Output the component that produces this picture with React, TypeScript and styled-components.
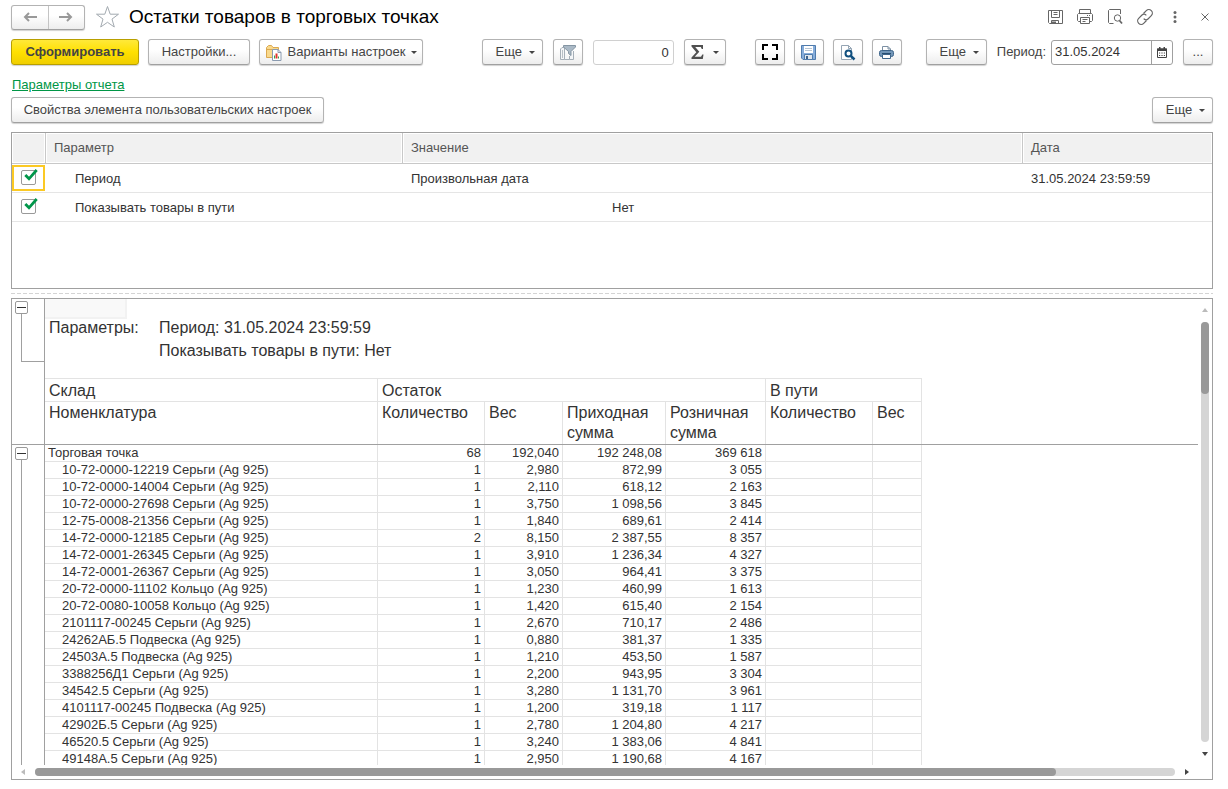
import React from "react";
import styled, { createGlobalStyle, css } from "styled-components";

const GlobalStyle = createGlobalStyle`
  * { box-sizing: border-box; }
  html, body, #root { height: 100%; }
  body {
    margin: 0;
    background: #fff;
    color: #333;
    font-family: "Liberation Sans", Arial, sans-serif;
    font-size: 13px;
    line-height: 16px;
  }
  button, input { font: inherit; color: inherit; }
`;

const Page = styled.div`
  display: flex;
  flex-direction: column;
  min-width: 1200px;
  height: 100vh;
  min-height: 500px;
  padding: 3px 15px 9px 11px;
  overflow: hidden;
`;

/* ---------- Title bar ---------- */

const TitleBar = styled.header`
  display: flex;
  align-items: center;
  height: 28px;
`;

const raised = css`
  border: 1px solid #b3b3b3;
  border-bottom-color: #a0a0a0;
  border-radius: 3px;
  background: linear-gradient(#fff 40%, #ededed);
  box-shadow: 0 1px 1px rgba(0, 0, 0, 0.18);
`;

const HistoryNav = styled.nav`
  ${raised}
  display: flex;
  width: 74px;
  height: 25px;
`;

const HistoryButton = styled.button`
  display: flex;
  flex: 1;
  align-items: center;
  justify-content: center;
  padding: 0;
  border: 0;
  background: none;
  & + & { border-left: 1px solid #c4c4c4; }
`;

const StarButton = styled.button`
  display: flex;
  margin: 0 9px 0 10px;
  padding: 0;
  border: 0;
  background: none;
`;

const Title = styled.h1`
  margin: 0;
  color: #000;
  font-size: 19px;
  font-weight: 400;
  line-height: 24px;
`;

const WindowActions = styled.div`
  display: flex;
  gap: 14px;
  margin-left: auto;
`;

const GhostButton = styled.button`
  display: flex;
  align-items: center;
  justify-content: center;
  width: 16px;
  height: 16px;
  padding: 0;
  border: 0;
  background: none;
`;

/* ---------- Toolbars ---------- */

const Toolbar = styled.div`
  display: flex;
  align-items: center;
  height: 26px;
  margin-top: 8px;
`;

const ToolGroup = styled.div<{ $gap: number; $before?: number }>`
  display: flex;
  align-items: center;
  gap: ${(p) => p.$gap}px;
  margin-left: ${(p) => (p.$before ? `${p.$before}px` : "0")};
`;

const Push = styled.div`
  flex: 1;
`;

const Button = styled.button<{ $primary?: boolean; $width?: number; $gap?: number }>`
  ${raised}
  display: flex;
  align-items: center;
  justify-content: center;
  gap: ${(p) => p.$gap ?? 6}px;
  height: 26px;
  width: ${(p) => (p.$width ? `${p.$width}px` : "auto")};
  padding: 0 ${(p) => (p.$width ? 0 : 12)}px;
  color: #444;
  white-space: nowrap;
  ${(p) =>
    p.$primary &&
    css`
      border-color: #b89f00;
      background: linear-gradient(#ffe93a, #ffe000 50%, #f0ce00);
      font-weight: 700;
    `}
`;

const Caret = styled.span`
  border: 3px solid transparent;
  border-top-color: #444;
  border-bottom: 0;
`;

const MoreText = styled.span`
  padding-left: 6px;
`;

const CountInput = styled.input`
  width: 81px;
  height: 25px;
  padding: 0 4px;
  border: 1px solid #d0d0d0;
  border-radius: 3px;
  text-align: right;
`;

const FieldLabel = styled.label`
  color: #444;
  margin-right: -5px;
`;

const DateField = styled.div`
  display: flex;
  width: 122px;
  height: 25px;
  border: 1px solid #a0a0a0;
  border-radius: 3px;
`;

const DateInput = styled.input`
  flex: 1;
  min-width: 0;
  padding: 0 3px;
  border: 0;
  background: none;
`;

const CalendarButton = styled.button`
  display: flex;
  align-items: center;
  justify-content: center;
  width: 21px;
  padding: 0;
  border: 0;
  border-left: 1px solid #a0a0a0;
  background: none;
`;

const SectionLink = styled.a`
  align-self: flex-start;
  margin: 12px 0 4px 1px;
  color: #009646;
`;

const SettingsBar = styled.div`
  display: flex;
  justify-content: space-between;
  height: 27px;
`;

/* ---------- Parameters table ---------- */

const ParamsPanel = styled.section`
  flex: none;
  height: 157px;
  margin-top: 8px;
  border: 1px solid #a0a0a0;
`;

const ParamsTable = styled.table`
  width: 100%;
  border-collapse: separate;
  border-spacing: 0;
  table-layout: fixed;
`;

const ParamHead = styled.th`
  height: 31px;
  padding: 0 8px;
  border-right: 1px solid #c8c8c8;
  border-bottom: 1px solid #c8c8c8;
  background: #f1f1f1;
  box-shadow: inset 0 0 0 1px #fff;
  color: #555;
  font-weight: 400;
  text-align: left;
  &:last-child { border-right: 0; }
`;

const ParamCell = styled.td<{ $indent?: number }>`
  height: 29px;
  padding: 2px 8px 0 ${(p) => p.$indent ?? 8}px;
  border-bottom: 1px solid #e5e5e5;
`;

const CheckCell = styled.td`
  height: 29px;
  padding: 0;
  border-bottom: 1px solid #e5e5e5;
`;

const CheckBox = styled.label<{ $active?: boolean }>`
  position: relative;
  display: block;
  width: 33px;
  height: 26px;
  padding: 3px 0 0 7px;
  border: 2px solid ${(p) => (p.$active ? "#fbc924" : "transparent")};
  input {
    appearance: none;
    display: block;
    width: 15px;
    height: 15px;
    margin: 0;
    border: 1px solid #999;
    border-radius: 2px;
  }
  svg {
    position: absolute;
    top: 2px;
    left: 10px;
    pointer-events: none;
  }
`;

const Splitter = styled.div`
  flex: none;
  height: 1px;
  margin: 4px 0;
  background: repeating-linear-gradient(90deg, #d4d4d4 0 4px, transparent 4px 6px);
`;

/* ---------- Report ---------- */

const ReportPanel = styled.section`
  display: grid;
  flex: 1;
  grid-template: minmax(0, 1fr) 14px / minmax(0, 1fr) 14px;
  min-height: 0;
  border: 1px solid #a0a0a0;
`;

const Sheet = styled.div`
  display: flex;
  flex-direction: column;
  min-height: 0;
  overflow: hidden;
`;

const Pane = styled.div<{ $frozen?: boolean }>`
  display: flex;
  flex: ${(p) => (p.$frozen ? "none" : "1")};
  min-height: 0;
  overflow: hidden;
  border-bottom: ${(p) => (p.$frozen ? "1px solid #a0a0a0" : "0")};
`;

const Gutter = styled.div`
  display: flex;
  flex: none;
  flex-direction: column;
  width: 33px;
  padding: 2px 0 0 3px;
  border-right: 1px solid #a0a0a0;
`;

const CollapseButton = styled.button`
  display: flex;
  flex: none;
  align-items: center;
  justify-content: center;
  width: 13px;
  height: 13px;
  padding: 0;
  border: 1px solid #999;
  border-radius: 2px;
  background: #fff;
  &::before {
    content: "";
    width: 9px;
    height: 1px;
    background: #333;
  }
`;

const GroupLine = styled.div<{ $closed?: boolean }>`
  flex: ${(p) => (p.$closed ? "0 0 48px" : "1")};
  margin-left: 6px;
  border-left: 1px solid #a0a0a0;
  border-bottom: ${(p) => (p.$closed ? "1px solid #a0a0a0" : "0")};
`;

const PaneContent = styled.div`
  flex: 1;
  min-width: 0;
`;

const CurrentCell = styled.div`
  width: 82px;
  height: 20px;
  border: solid #f2f2f2;
  border-width: 0 2px 2px 0;
  background: #f9f9f9;
`;

const ReportParams = styled.dl`
  display: grid;
  grid-template-columns: 110px 1fr;
  align-content: start;
  height: 59px;
  margin: 0;
  padding-left: 4px;
  font-size: 16px;
  line-height: 18px;
  dt, dd { height: 23px; margin: 0; }
  dd { grid-column: 2; }
`;

const ReportTable = styled.table`
  width: 877px;
  border-collapse: separate;
  border-spacing: 0;
  table-layout: fixed;
`;

const HeadCell = styled.th<{ $top?: boolean }>`
  height: ${(p) => (p.$top ? 24 : 42)}px;
  padding: ${(p) => (p.$top ? "2px 4px 0" : "1px 4px 0")};
  border: solid #e3e3e3;
  border-width: ${(p) => (p.$top ? "1px 1px 1px 0" : "0 1px 0 0")};
  font-size: 16px;
  font-weight: 400;
  line-height: 20px;
  text-align: left;
  vertical-align: top;
`;

const BodyCell = styled.td<{ $kind: "group" | "item" | "number" }>`
  height: 17px;
  padding: 0 3px 0 ${(p) => (p.$kind === "item" ? 17 : 3)}px;
  border: solid #e3e3e3;
  border-width: 0 1px 1px 0;
  line-height: 16px;
  text-align: ${(p) => (p.$kind === "number" ? "right" : "left")};
  white-space: nowrap;
`;

const VerticalBar = styled.div`
  display: flex;
  flex-direction: column;
  align-items: center;
  justify-content: space-between;
  padding: 8px 0;
`;

const HorizontalBar = styled.div`
  display: flex;
  align-items: center;
  justify-content: space-between;
  padding: 0 8px;
`;

const Track = styled.div<{ $vertical?: boolean }>`
  flex: 1;
  border-radius: 4px;
  background: #d5d5d5;
  ${(p) => (p.$vertical ? "width: 8px; margin: 9px 0;" : "height: 8px; margin: 0 9px;")}
`;

const Thumb = styled.div<{ $vertical?: boolean }>`
  width: ${(p) => (p.$vertical ? "100%" : "89.6%")};
  height: ${(p) => (p.$vertical ? "17.1%" : "100%")};
  border-radius: 4px;
  background: #999;
`;

const ScrollButton = styled.button`
  display: flex;
  padding: 0;
  border: 0;
  background: none;
`;

/* ---------- Icons ---------- */

const Arrow = ({ back }: { back?: boolean }) => (
  <svg width="14" height="12" viewBox="0 0 14 12" fill="none" stroke="#999" strokeWidth="2">
    <path d={back ? "M14 6H2.500M6 2L2 6l4 4" : "M0 6H11.500M8 2l4 4-4 4"} />
  </svg>
);

const Star = () => (
  <svg width="25" height="24" viewBox="0 0 25 24" fill="#fff" stroke="#a3aab0" strokeWidth="1">
    <path d="M12.500 1.500L15.200 9.200H23.500L17 14.100L19.300 22L12.500 17.300L5.700 22L8 14.100L1.500 9.200H9.800Z" />
  </svg>
);

const VariantsIcon = () => (
  <svg width="17" height="17" viewBox="0 0 17 17">
    <path d="M1.500 13.500V3.500L3.500 1.500H6.500L8 3.500H13.500V13.500Z" fill="#f9d98c" stroke="#dba850" />
    <path d="M1.500 5.500H13.500" stroke="#dba850" />
    <path d="M7.500 5.500H13L16 8.500V16.500H7.500Z" fill="#fff" stroke="#8b9bb0" />
    <path d="M13 5.500V8.500H16" fill="none" stroke="#8b9bb0" />
    <path d="M9.500 14.500v-3" stroke="#2fa84f" strokeWidth="1" />
    <path d="M11.500 14.500v-5" stroke="#e0352b" strokeWidth="2" />
    <path d="M13.500 14.500v-2" stroke="#2fa84f" strokeWidth="1" />
  </svg>
);

const FilterIcon = () => (
  <svg width="17" height="17" viewBox="0 0 17 17">
    <path d="M1.500 5L3 3.500H5.500V15.500H1.500Z" fill="#f4f6f8" stroke="#a5afb8" />
    <path d="M5.500 6V15.500H10.500M14.500 7V15.500H10.500V12" fill="#f4f6f8" stroke="#a5afb8" />
    <path d="M3.500 6v8" stroke="#b8c0c7" />
    <path d="M4.500 1.500H16.500V3L12 7.500V11.500L9.500 9.500V7.500L4.500 3Z" fill="#aab9c6" stroke="#8495a3" />
  </svg>
);

const SigmaIcon = () => (
  <svg width="13" height="14" viewBox="0 0 13 14" fill="#505050">
    <path d="M.5 0H12V4H10.800L9.800 2H4.200L8.300 6.700L3.700 11.800H10L11.300 9.500H12.500L11.800 14H.5V12.500L5.300 7.200L.5 1.500Z" />
  </svg>
);

const ExpandIcon = () => (
  <svg width="16" height="16" viewBox="0 0 16 16" fill="none" stroke="#000" strokeWidth="2">
    <path d="M1 6V1H6M10 1H15V6M15 10V15H10M6 15H1V10" />
  </svg>
);

const DiskIcon = () => (
  <svg width="15" height="15" viewBox="0 0 15 15">
    <path d="M.5 .5H14.500V14.500H2L.5 13Z" fill="#86addb" stroke="#4f7bac" />
    <path d="M3 1H12V8H3Z" fill="#fff" />
    <path d="M4 3.500h7M4 5.500h7" stroke="#b5c4d3" />
    <path d="M3.500 9.500H11.500V14.500H3.500Z" fill="#dfe6ed" stroke="#4f7bac" />
    <path d="M5 11H7V14H5Z" fill="#3c628c" />
  </svg>
);

const PreviewIcon = () => (
  <svg width="17" height="17" viewBox="0 0 17 17" fill="none">
    <path d="M2.500 1.500H9.500L12.500 4.500V15.500H2.500Z" fill="#fff" stroke="#95a5b4" />
    <path d="M9.500 1.500V4.500H12.500" stroke="#95a5b4" />
    <circle cx="9.500" cy="9.500" r="3" fill="#fff" stroke="#11507f" strokeWidth="2" />
    <path d="M11.800 11.800l3.700 3.700" stroke="#11507f" strokeWidth="2.500" />
  </svg>
);

const PrinterIcon = () => (
  <svg width="15" height="15" viewBox="0 0 15 15">
    <path d="M3.500 6V1.500H9L11.500 4V6" fill="#fff" stroke="#7c90a3" />
    <path d="M9 1.500V4H11.500" fill="none" stroke="#7c90a3" />
    <rect x=".5" y="5.500" width="14" height="6" rx="2" fill="#7296b8" stroke="#3e658a" />
    <path d="M3 8.500h9" stroke="#284d70" />
    <path d="M3.500 9.500H11.500V13.500H3.500Z" fill="#fff" stroke="#3e658a" />
  </svg>
);

const CalendarIcon = () => (
  <svg width="10" height="11" viewBox="0 0 10 11">
    <path d="M.5 2V10.500H9.500V2Z" fill="none" stroke="#444" />
    <path d="M0 1.500H10V4H0ZM2 0H3.500V2H2ZM6.500 0H8V2H6.500Z" fill="#444" />
    <path d="M2 6h6M2 8.500h6" stroke="#444" strokeDasharray="1.200 1.200" />
  </svg>
);

const line = { fill: "none", stroke: "#666", strokeWidth: 1 } as const;

const SaveOutline = () => (
  <svg width="16" height="16" viewBox="0 0 16 16" {...line}>
    <path d="M1.500 1.500H15.500V14.500H2.500L1.500 13.500Z" />
    <path d="M4.500 1.500V8.500H12.500V1.500M6.500 3.500h4M6.500 5.500h4" />
    <path d="M4.500 14.500V11.500H11.500V14.500" />
    <path d="M5 13.500h4" strokeWidth="2" />
  </svg>
);

const PrintOutline = () => (
  <svg width="16" height="16" viewBox="0 0 16 16" {...line}>
    <path d="M2.500 4.500V.5H13.500V4.500M3.500 12.500H1.500L.5 11.500V5.500L1.500 4.500H14.500L15.500 5.500V11.500L14.500 12.500H12.500" />
    <path d="M3.500 8.500H12.500V14.500H3.500ZM5.500 10.500h5M5.500 12.500h3M10 6.500h1M12 6.500h1" />
  </svg>
);

const SearchOutline = () => (
  <svg width="16" height="16" viewBox="0 0 16 16" {...line}>
    <path d="M6.500 14.500H2.500L1.500 13.500V1.500L2.500 .5H13.500V5" />
    <circle cx="10.500" cy="9" r="3.200" />
    <path d="M12.500 11.500L15 14.500" strokeWidth="1.800" />
  </svg>
);

const LinkOutline = () => (
  <svg width="16" height="16" viewBox="0 0 16 16" {...line} strokeWidth="1.200">
    <path d="M6.500 4.500L9.300 1.700A2.900 2.900 0 0 1 14.300 6.700L11 10A2.900 2.900 0 0 1 6.700 9.700" />
    <path d="M9.500 11.500L6.700 14.300A2.900 2.900 0 0 1 1.700 9.300L5 6A2.900 2.900 0 0 1 9.300 6.300" />
  </svg>
);

const Dots = () => (
  <svg width="4" height="14" viewBox="0 0 4 14" fill="#666">
    <circle cx="2" cy="2.500" r="1.500" />
    <circle cx="2" cy="7" r="1.500" />
    <circle cx="2" cy="11.500" r="1.500" />
  </svg>
);

const Cross = () => (
  <svg width="8" height="8" viewBox="0 0 8 8" stroke="#666">
    <path d="M.5 .5l7 7M7.500 .5L.5 7.500" />
  </svg>
);

const CheckMark = () => (
  <svg width="14" height="13" viewBox="0 0 14 13" fill="none" stroke="#00964a" strokeWidth="2.800">
    <path d="M1.300 6L5 9.800L12.700 1" />
  </svg>
);

const Triangle = ({ points, muted }: { points: string; muted?: boolean }) => (
  <svg width="6" height="6" viewBox="0 0 6 6" fill={muted ? "#bbb" : "#444"}>
    <polygon points={points} />
  </svg>
);

/* ---------- Data ---------- */

const params = [
  { name: "Период", value: "Произвольная дата", date: "31.05.2024 23:59:59", active: true },
  { name: "Показывать товары в пути", value: "Нет", date: "", indent: 209 },
];

const rows: string[][] = [
  ["Торговая точка", "68", "192,040", "192 248,08", "369 618"],
  ["10-72-0000-12219 Серьги (Ag 925)", "1", "2,980", "872,99", "3 055"],
  ["10-72-0000-14004 Серьги (Ag 925)", "1", "2,110", "618,12", "2 163"],
  ["10-72-0000-27698 Серьги (Ag 925)", "1", "3,750", "1 098,56", "3 845"],
  ["12-75-0008-21356 Серьги (Ag 925)", "1", "1,840", "689,61", "2 414"],
  ["14-72-0000-12185 Серьги (Ag 925)", "2", "8,150", "2 387,55", "8 357"],
  ["14-72-0001-26345 Серьги (Ag 925)", "1", "3,910", "1 236,34", "4 327"],
  ["14-72-0001-26367 Серьги (Ag 925)", "1", "3,050", "964,41", "3 375"],
  ["20-72-0000-11102 Кольцо (Ag 925)", "1", "1,230", "460,99", "1 613"],
  ["20-72-0080-10058 Кольцо (Ag 925)", "1", "1,420", "615,40", "2 154"],
  ["2101117-00245 Серьги (Ag 925)", "1", "2,670", "710,17", "2 486"],
  ["24262АБ.5 Подвеска (Ag 925)", "1", "0,880", "381,37", "1 335"],
  ["24503А.5 Подвеска (Ag 925)", "1", "1,210", "453,50", "1 587"],
  ["3388256Д1 Серьги (Ag 925)", "1", "2,200", "943,95", "3 304"],
  ["34542.5 Серьги (Ag 925)", "1", "3,280", "1 131,70", "3 961"],
  ["4101117-00245 Подвеска (Ag 925)", "1", "1,200", "319,18", "1 117"],
  ["42902Б.5 Серьги (Ag 925)", "1", "2,780", "1 204,80", "4 217"],
  ["46520.5 Серьги (Ag 925)", "1", "3,240", "1 383,06", "4 841"],
  ["49148А.5 Серьги (Ag 925)", "1", "2,950", "1 190,68", "4 167"],
];

const columnWidths = [333, 107, 78, 103, 100, 107, 49];

const Columns = () => (
  <colgroup>
    {columnWidths.map((width, i) => (
      <col key={i} width={width} />
    ))}
  </colgroup>
);

const MoreButton = () => (
  <Button $width={61} $gap={7}>
    <MoreText>Еще</MoreText>
    <Caret />
  </Button>
);

export default function App() {
  return (
    <>
      <GlobalStyle />
      <Page>
        <TitleBar>
          <HistoryNav>
            <HistoryButton aria-label="Назад"><Arrow back /></HistoryButton>
            <HistoryButton aria-label="Вперед"><Arrow /></HistoryButton>
          </HistoryNav>
          <StarButton aria-label="Избранное"><Star /></StarButton>
          <Title>Остатки товаров в торговых точках</Title>
          <WindowActions>
            <GhostButton aria-label="Сохранить"><SaveOutline /></GhostButton>
            <GhostButton aria-label="Печать"><PrintOutline /></GhostButton>
            <GhostButton aria-label="Просмотр"><SearchOutline /></GhostButton>
            <GhostButton aria-label="Ссылка"><LinkOutline /></GhostButton>
            <GhostButton aria-label="Меню"><Dots /></GhostButton>
            <GhostButton aria-label="Закрыть"><Cross /></GhostButton>
          </WindowActions>
        </TitleBar>

        <Toolbar>
          <ToolGroup $gap={9}>
            <Button $primary $width={128}>Сформировать</Button>
            <Button $width={102}>Настройки...</Button>
            <Button $width={164}>
              <VariantsIcon />
              Варианты настроек
              <Caret />
            </Button>
          </ToolGroup>
          <Push />
          <ToolGroup $gap={10}>
            <MoreButton />
            <Button $width={30} aria-label="Отбор"><FilterIcon /></Button>
            <CountInput aria-label="Сумма" defaultValue="0" />
            <Button $width={42} $gap={9} aria-label="Итоги">
              <SigmaIcon />
              <Caret />
            </Button>
          </ToolGroup>
          <ToolGroup $gap={9} $before={29}>
            <Button $width={30} aria-label="Развернуть"><ExpandIcon /></Button>
            <Button $width={30} aria-label="Сохранить отчет"><DiskIcon /></Button>
            <Button $width={30} aria-label="Предварительный просмотр"><PreviewIcon /></Button>
            <Button $width={30} aria-label="Напечатать"><PrinterIcon /></Button>
          </ToolGroup>
          <ToolGroup $gap={10} $before={24}>
            <MoreButton />
            <FieldLabel htmlFor="period">Период:</FieldLabel>
            <DateField>
              <DateInput id="period" defaultValue="31.05.2024" />
              <CalendarButton aria-label="Календарь"><CalendarIcon /></CalendarButton>
            </DateField>
            <Button $width={30}>...</Button>
          </ToolGroup>
        </Toolbar>

        <SectionLink href="#params">Параметры отчета</SectionLink>

        <SettingsBar>
          <Button $width={313}>Свойства элемента пользовательских настроек</Button>
          <MoreButton />
        </SettingsBar>

        <ParamsPanel id="params">
          <ParamsTable>
            <colgroup>
              <col width="34" />
              <col width="357" />
              <col />
              <col width="189" />
            </colgroup>
            <thead>
              <tr>
                <ParamHead />
                <ParamHead>Параметр</ParamHead>
                <ParamHead>Значение</ParamHead>
                <ParamHead>Дата</ParamHead>
              </tr>
            </thead>
            <tbody>
              {params.map((p) => (
                <tr key={p.name}>
                  <CheckCell>
                    <CheckBox $active={p.active}>
                      <input type="checkbox" defaultChecked aria-label={p.name} />
                      <CheckMark />
                    </CheckBox>
                  </CheckCell>
                  <ParamCell $indent={29}>{p.name}</ParamCell>
                  <ParamCell $indent={p.indent}>{p.value}</ParamCell>
                  <ParamCell>{p.date}</ParamCell>
                </tr>
              ))}
            </tbody>
          </ParamsTable>
        </ParamsPanel>

        <Splitter />

        <ReportPanel>
          <Sheet>
            <Pane $frozen>
              <Gutter>
                <CollapseButton aria-label="Свернуть параметры" />
                <GroupLine $closed />
              </Gutter>
              <PaneContent>
                <CurrentCell />
                <ReportParams>
                  <dt>Параметры:</dt>
                  <dd>Период: 31.05.2024 23:59:59</dd>
                  <dd>Показывать товары в пути: Нет</dd>
                </ReportParams>
                <ReportTable>
                  <Columns />
                  <thead>
                    <tr>
                      <HeadCell $top>Склад</HeadCell>
                      <HeadCell $top colSpan={4}>Остаток</HeadCell>
                      <HeadCell $top colSpan={2}>В пути</HeadCell>
                    </tr>
                    <tr>
                      <HeadCell>Номенклатура</HeadCell>
                      <HeadCell>Количество</HeadCell>
                      <HeadCell>Вес</HeadCell>
                      <HeadCell>Приходная сумма</HeadCell>
                      <HeadCell>Розничная сумма</HeadCell>
                      <HeadCell>Количество</HeadCell>
                      <HeadCell>Вес</HeadCell>
                    </tr>
                  </thead>
                </ReportTable>
              </PaneContent>
            </Pane>
            <Pane>
              <Gutter>
                <CollapseButton aria-label="Свернуть группу" />
                <GroupLine />
              </Gutter>
              <PaneContent>
                <ReportTable>
                  <Columns />
                  <tbody>
                    {rows.map(([name, ...values], i) => (
                      <tr key={name}>
                        <BodyCell $kind={i === 0 ? "group" : "item"}>{name}</BodyCell>
                        {values.map((value, j) => (
                          <BodyCell key={j} $kind="number">{value}</BodyCell>
                        ))}
                        <BodyCell $kind="number" />
                        <BodyCell $kind="number" />
                      </tr>
                    ))}
                  </tbody>
                </ReportTable>
              </PaneContent>
            </Pane>
          </Sheet>
          <VerticalBar>
            <ScrollButton aria-label="Вверх"><Triangle muted points="0,5 6,5 3,1" /></ScrollButton>
            <Track $vertical><Thumb $vertical /></Track>
            <ScrollButton aria-label="Вниз"><Triangle points="0,1 6,1 3,5" /></ScrollButton>
          </VerticalBar>
          <HorizontalBar>
            <ScrollButton aria-label="Влево"><Triangle muted points="5,0 5,6 1,3" /></ScrollButton>
            <Track><Thumb /></Track>
            <ScrollButton aria-label="Вправо"><Triangle points="1,0 1,6 5,3" /></ScrollButton>
          </HorizontalBar>
        </ReportPanel>
      </Page>
    </>
  );
}
